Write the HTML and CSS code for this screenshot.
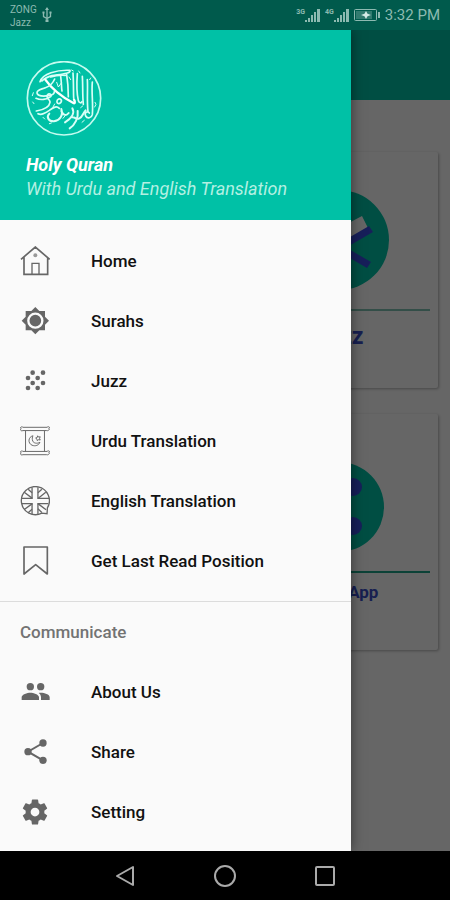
FILE: index.html
```html
<!DOCTYPE html>
<html lang="en">
<head>
  <meta charset="UTF-8" />
  <meta name="viewport" content="width=device-width, initial-scale=1.0"/>
  <title>Holy Quran</title>
  <link rel="stylesheet" href="styles.css">
</head>
<body>

  <div class="status-bar">
    <div class="carriers">ZONG<br/>Jazz</div>
    <svg class="usb" viewBox="0 0 10 16" aria-hidden="true">
      <path d="M5 1v14M1.500 5v4.500L5 11.500 8.500 9.500V5" fill="none" stroke="currentColor" stroke-width="1.300"/>
      <path d="M5 0l2 3H3zM3.500 12.500h3v2.500h-3zM.5 4.500h2v2h-2zM7.500 4.500h2v2h-2z" fill="currentColor"/>
    </svg>
    <div class="status-right">
      <div class="signal">
        <span>3G</span>
        <svg viewBox="0 0 15 14" aria-hidden="true"><path d="M0 12h2v2H0zM3 10h2v4H3zM6 7h2v7H6zM9 4h2v10H9zM12 1h3v13h-3z"/></svg>
      </div>
      <div class="signal">
        <span>4G</span>
        <svg viewBox="0 0 15 14" aria-hidden="true"><path d="M0 12h2v2H0zM3 10h2v4H3zM6 7h2v7H6zM9 4h2v10H9zM12 1h3v13h-3z"/></svg>
      </div>
      <svg class="battery" viewBox="0 0 26 12" aria-hidden="true">
        <rect x=".5" y=".5" width="22" height="11" rx="1" fill="none" stroke="currentColor"/>
        <path d="M2 2h16v8H2z" fill="currentColor" opacity=".35"/>
        <path d="M24 3h2v6h-2z" fill="currentColor"/>
        <path d="M12 2l1.500 2.800L17 6l-3.500 1.200L12 10l-1.500-2.800L7 6l3.500-1.200z" fill="#d5ebe6"/>
      </svg>
      <span class="clock">3:32 PM</span>
    </div>
  </div>

  <div class="screen">

    <!-- Home page behind the drawer -->
    <div class="home">
      <div class="toolbar"></div>
      <div class="cards">
        <div class="card"></div>
        <div class="card">
          <svg class="card-icon" viewBox="0 0 100 100" aria-hidden="true">
            <circle cx="50" cy="50" r="50" fill="#00c4a7"/>
            <path d="M50 38L73 26l6 12-29 16L21 38l6-12z" fill="#fff"/>
            <path d="M18 72L80 36l4 6-62 36zM82 72L20 36l-4 6 62 36z" fill="#3a4fe0"/>
          </svg>
          <hr class="card-line">
          <div class="card-title">Juzz</div>
        </div>
        <div class="card"></div>
        <div class="card card-app">
          <svg class="card-icon" viewBox="0 0 90 90" aria-hidden="true">
            <circle cx="45" cy="45" r="45" fill="#00c4a7"/>
            <path d="M58 25L28 45l30 19" fill="none" stroke="#3a4fe0" stroke-width="5"/>
            <g fill="#3a4fe0"><circle cx="59" cy="25" r="9"/><circle cx="28" cy="45" r="9"/><circle cx="59" cy="64" r="9"/></g>
          </svg>
          <hr class="card-line">
          <div class="card-title">Share App</div>
        </div>
      </div>
    </div>

    <div class="scrim"></div>

    <!-- Drawer -->
    <div class="drawer">
      <div class="drawer-header">
        <svg class="logo" viewBox="48 36 228 228" role="img" aria-label="Holy Quran emblem">
          <circle cx="162" cy="148" r="110" fill="none" stroke="#c4fbef" stroke-width="5"/>
          <g fill="none" stroke="#d9fff7" stroke-linecap="round" stroke-linejoin="round">
            <path stroke-width="5" d="M90 98C98 74 140 62 180 64c4 10-30 12-54 16-14 4-24 10-30 16"/>
            <path stroke-width="7" stroke="#fff" d="M106 92c18 26 46 50 84 70 5 3 6-4 2-10"/>
            <path stroke-width="5" d="M122 84c12-4 30-6 44-5M134 90c-5 12-16 22-28 26-10 5-26 5-25 16 2 10 22 10 36 8 10-2 16-6 16-12"/>
            <path stroke-width="5" d="M78 148c14 6 32 4 44-5 6-6-4-12-10-5-6 9 9 13 8 22-2 14-18 22-41 26"/>
            <path stroke-width="5" d="M84 194c10 6 22-2 34-10 14-10 22-14 30-6M142 153c8-8 16 0 10 8-6 6-14 2-10-8"/>
            <path stroke-width="6" d="M118 194c-10 10-2 24 14 23 18-2 28-18 22-37M154 186c6 14 15 15 22 6"/>
            <path stroke-width="6" d="M187 178c8 14-2 30-22 42M203 186c3 20-8 42-24 52M186 205c10-2 12 8 22 3 10-4 12-18 19-24"/>
            <path stroke-width="5" d="M152 82c3 20 2 36 4 44M170 77c4 25 5 50 5 66M189 72c2 27 1 50 2 76M202 74c-2 27-1 63 3 81 3 8 9 8 11 3"/>
            <path stroke-width="5" d="M217 82c2 28 0 54 3 84M232 92c2 30-2 60 2 97M247 99c-3 32 3 66 0 98-2 10-15 13-20 4-5-10 5-17 11-9"/>
            <path stroke-width="3" d="M140 100l5 14 9-12M206 66l4 6M239 92l3-5M255 160l3 6-4 8M212 176l6-5M134 165l-5 9M70 131l-3 9M72 164l-4-5M104 210l-5-5M164 202l-5 6M216 220l7-6M182 92l-5-8M124 222l-6 2M190 66l-5-3"/>
          </g>
        </svg>
        <div class="app-name">Holy Quran</div>
        <div class="app-sub">With Urdu and English Translation</div>
      </div>

      <nav class="menu">
        <a class="menu-item" href="#home">
          <svg class="icon" viewBox="60 33 90 90" aria-hidden="true">
            <g fill="none" stroke="currentColor" stroke-width="5">
              <path d="M63 73L106 36l43 37M72 67v51h71V67"/>
              <path d="M96 117V85h21v32" stroke-width="4"/>
            </g>
            <circle cx="106" cy="61" r="6" fill="#999"/>
          </svg>
          Home
        </a>
        <a class="menu-item" href="#surahs">
          <svg class="icon" viewBox="60 213 90 90" aria-hidden="true">
            <path d="M106 216l12 12h17v17l12 12-12 12v17h-17l-12 12-12-12H77v-17l-12-12 12-12v-17h17z" fill="currentColor"/>
            <circle cx="106" cy="257" r="21" fill="currentColor" stroke="#fafafa" stroke-width="7"/>
          </svg>
          Surahs
        </a>
        <a class="menu-item" href="#juzz">
          <svg class="icon" viewBox="60 393 90 90" aria-hidden="true">
            <g fill="currentColor">
              <circle cx="98" cy="413" r="7"/><circle cx="129" cy="413" r="7"/>
              <circle cx="84" cy="429" r="7"/><circle cx="113" cy="429" r="7"/>
              <circle cx="98" cy="444" r="7"/><circle cx="129" cy="444" r="7"/>
              <circle cx="84" cy="459" r="7"/><circle cx="113" cy="459" r="7"/>
            </g>
          </svg>
          Juzz
        </a>
        <a class="menu-item" href="#urdu">
          <svg class="icon" viewBox="61 46 92 92" aria-hidden="true">
            <g fill="none" stroke="currentColor" stroke-width="3">
              <path d="M78 61v63M136 61v63"/>
              <path d="M70 50h74c3-3 7-2 8 1-3 1-3 3-1 5-2 4-5 5-8 4H70c-4 2-7 0-8-3 3-1 3-3 0-6 3-3 6-3 8-1zM70 124h74c3-3 7-2 8 1-3 1-3 3-1 5-2 4-5 5-8 4H70c-4 2-7 0-8-3 3-1 3-3 0-6 3-3 6-3 8-1z"/>
              <path d="M101 76c-15 3-17 23-3 29 10 4 21 0 24-9-9 5-19 3-22-4-2-6-2-12 1-16z"/>
              <path d="M115 76l3 4 5-1-2 5 2 5-5-1-4 3-1-5-4-3 5-2z"/>
            </g>
          </svg>
          Urdu Translation
        </a>
        <a class="menu-item" href="#english">
          <svg class="icon" viewBox="61 225 92 92" aria-hidden="true">
            <g fill="none" stroke="currentColor" stroke-width="4">
              <path d="M145 292a43 43 0 1 0-17 16l16 2z"/>
              <path d="M98 229v34H65M116 229v34h34M98 312v-33H65M116 312v-33h32"/>
              <path d="M74 244l25 19M86 235l12 11M140 244l-24 19M128 235l-12 11M74 297l25-18M86 307l12-11M141 298l-25-19M128 306l-12-11"/>
            </g>
          </svg>
          English Translation
        </a>
        <a class="menu-item" href="#last-read">
          <svg class="icon" viewBox="60 408 90 90" aria-hidden="true">
            <path d="M72 411h70v81l-35-28-35 28z" fill="none" stroke="currentColor" stroke-width="5" stroke-linejoin="round"/>
          </svg>
          Get Last Read Position
        </a>
      </nav>

      <div class="section-title">Communicate</div>

      <nav class="menu-more">
        <a class="menu-item" href="#about">
          <svg class="icon" viewBox="60 261 90 90" aria-hidden="true">
            <g fill="currentColor">
              <circle cx="91" cy="290" r="11"/>
              <circle cx="122" cy="290" r="11"/>
              <path d="M65 330v-8c0-9 17-14 26-14s26 5 26 14v8zM123 330v-8c0-6-3-10-7-13 12-2 33 3 33 13v8z"/>
            </g>
          </svg>
          About Us
        </a>
        <a class="menu-item" href="#share">
          <svg class="icon" viewBox="60 51 90 90" aria-hidden="true">
            <path d="M129 69L84 95l45 26" fill="none" stroke="currentColor" stroke-width="6"/>
            <g fill="currentColor"><circle cx="129" cy="69" r="11"/><circle cx="84" cy="95" r="11"/><circle cx="129" cy="121" r="11"/></g>
          </svg>
          Share
        </a>
        <a class="menu-item" href="#setting">
          <svg class="icon" viewBox="0 0 24 24" aria-hidden="true">
            <path fill="currentColor" d="M19.430 12.980c.04-.32.07-.64.07-.98s-.03-.66-.07-.98l2.110-1.650c.19-.15.24-.42.12-.64l-2-3.460c-.12-.22-.39-.3-.61-.22l-2.490 1c-.52-.4-1.080-.73-1.690-.98l-.38-2.650C14.460 2.180 14.250 2 14 2h-4c-.25 0-.46.18-.49.42l-.38 2.650c-.61.25-1.170.59-1.690.98l-2.490-1c-.23-.09-.49 0-.61.22l-2 3.460c-.13.22-.07.49.12.64l2.110 1.650c-.04.32-.07.65-.07.98s.03.66.07.98l-2.110 1.650c-.19.15-.24.42-.12.64l2 3.460c.12.22.39.3.61.22l2.490-1c.52.4 1.080.73 1.690.98l.38 2.650c.03.24.24.42.49.42h4c.25 0 .46-.18.49-.42l.38-2.650c.61-.25 1.170-.59 1.690-.98l2.490 1c.23.09.49 0 .61-.22l2-3.460c.12-.22.07-.49-.12-.64zM12 15.500a3.500 3.500 0 1 1 0-7 3.500 3.500 0 0 1 0 7z"/>
          </svg>
          Setting
        </a>
      </nav>
    </div>
  </div>

  <div class="nav-bar">
    <button class="nav-btn" aria-label="Back">
      <svg viewBox="0 0 24 24" aria-hidden="true"><path d="M20 3v18L4 12z"/></svg>
    </button>
    <button class="nav-btn" aria-label="Home">
      <svg viewBox="0 0 24 24" aria-hidden="true"><circle cx="12" cy="12" r="10"/></svg>
    </button>
    <button class="nav-btn" aria-label="Recent apps">
      <svg viewBox="0 0 24 24" aria-hidden="true"><rect x="3" y="3" width="18" height="18" rx="1"/></svg>
    </button>
  </div>

</body>
</html>
```
FILE: styles.css
```css
* {
  box-sizing: border-box;
}

body {
  margin: 0;
  min-height: 100vh;
  display: flex;
  flex-direction: column;
  font-family: Roboto, sans-serif;
  background: #000;
}

.status-bar {
  display: flex;
  align-items: center;
  height: 30px;
  padding: 0 10px;
  background: #005a4c;
  color: #8dbab1;
}

.carriers {
  padding-top: 2px;
  font-size: 10px;
  line-height: 13px;
}

.usb {
  width: 10px;
  height: 16px;
  margin-left: 5px;
}

.status-right {
  display: flex;
  align-items: center;
  gap: 5px;
  margin-left: auto;
}

.signal {
  display: flex;
  align-items: flex-start;
}

.signal span {
  font-size: 7px;
  line-height: 8px;
  font-weight: bold;
}

.signal svg {
  width: 15px;
  height: 14px;
  fill: currentColor;
}

.battery {
  width: 26px;
  height: 12px;
}

.clock {
  font-size: 15px;
}

/* home page, scrim and drawer share one grid cell */
.screen {
  flex: 1;
  display: grid;
  overflow: hidden;
}

.home,
.scrim,
.drawer {
  grid-area: 1 / 1;
}

.home {
  background: #fff;
}

.toolbar {
  height: 70px;
  background: #00c4a7;
}

.cards {
  display: grid;
  grid-template-columns: 1fr 1fr;
  gap: 26px 30px;
  padding: 52px 12px;
}

.card {
  display: flex;
  flex-direction: column;
  align-items: center;
  height: 236px;
  padding: 38px 8px 0;
  border-radius: 2px;
  background: #fff;
  box-shadow: 1px 1px 3px rgba(0, 0, 0, 0.3);
}

.card-icon {
  width: 100px;
  height: 100px;
}

.card-line {
  width: 100%;
  height: 2px;
  margin: 19px 0 12px;
  border: none;
  background: #7fc4b4;
}

.card-title {
  font-size: 23px;
  line-height: 28px;
  font-weight: bold;
  color: #3a4fc8;
}

.card-app {
  padding-top: 48px;
}

.card-app .card-icon {
  width: 90px;
  height: 90px;
}

.card-app .card-line {
  margin-bottom: 5px;
  background: #1fa58a;
}

.card-app .card-title {
  font-size: 17px;
}

.scrim {
  background: rgba(0, 0, 0, 0.6);
}

.drawer {
  width: 78%;
  background: #fafafa;
  box-shadow: 0 0 12px rgba(0, 0, 0, 0.5);
}

.drawer-header {
  padding: 31px 26px 19px;
  background: #00c1a6;
  font-style: italic;
  font-size: 18px;
  line-height: 24px;
}

.logo {
  display: block;
  width: 76px;
  height: 76px;
  margin-bottom: 16px;
}

.app-name {
  font-weight: bold;
  color: #fff;
}

.app-sub {
  color: #b3f0e2;
}

.menu {
  padding: 11px 0 10px;
  border-bottom: 1px solid #dcdcdc;
}

.menu-item {
  display: flex;
  align-items: center;
  gap: 41px;
  height: 60px;
  padding: 0 20px;
  font-size: 17px;
  font-weight: 500;
  color: #111;
  text-decoration: none;
}

.icon {
  width: 30px;
  height: 30px;
  color: #666;
}

.section-title {
  padding: 0 20px;
  font-size: 17px;
  line-height: 60px;
  font-weight: 500;
  color: #737373;
}

.nav-bar {
  display: flex;
  justify-content: center;
  gap: 76px;
  height: 49px;
  background: #000;
}

.nav-btn {
  display: flex;
  align-items: center;
  padding: 0;
  border: none;
  background: none;
  cursor: pointer;
}

.nav-btn svg {
  width: 24px;
  height: 24px;
  fill: none;
  stroke: #aaa;
  stroke-width: 2;
  stroke-linejoin: round;
}
```
